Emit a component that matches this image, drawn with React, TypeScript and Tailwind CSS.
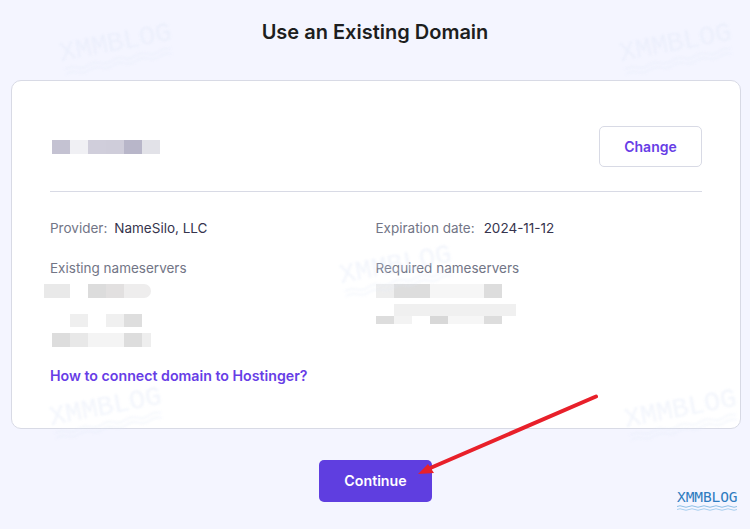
const INTER = "font-['Inter','Liberation_Sans',sans-serif]";

type Block = [number, string];

function Mosaic({ blocks, className }: { blocks: Block[]; className: string }) {
  return (
    <div className={`flex overflow-hidden blur-[0.4px] ${className}`}>
      {blocks.map(([w, c], i) => (
        <div key={i} className="h-full" style={{ width: w, backgroundColor: c }} />
      ))}
    </div>
  );
}

function Watermark({ className }: { className: string }) {
  return (
    <div className={`absolute pointer-events-none -rotate-[11deg] blur-[0.8px] ${className}`}>
      <div className="font-['Liberation_Mono',monospace] text-[27px] leading-[26px] tracking-[0px] text-[#dfe6f6] opacity-40">
        XMMBLOG
      </div>
      <svg width="118" height="12" viewBox="0 0 118 12" className="opacity-25">
        <path d="M2 3q6-3 12 0t12 0 12 0 12 0 12 0 12 0 12 0 12 0 12 0" fill="none" stroke="#dfe6f6" strokeWidth="2.5" />
        <path d="M2 8q6-3 12 0t12 0 12 0 12 0 12 0 12 0 12 0 12 0 12 0" fill="none" stroke="#dfe6f6" strokeWidth="2.5" />
      </svg>
    </div>
  );
}

export default function App() {
  return (
    <div className={`relative w-[750px] h-[529px] overflow-hidden bg-[#f4f5ff] ${INTER}`}>
      <h1 className="pt-[20px] h-[80px] text-center text-[20px] leading-[25px] font-semibold text-[#1d1e20]">
        Use an Existing Domain
      </h1>

      <div className="mx-[11px] w-[730px] h-[349px] rounded-[10px] border border-[#d8dae5] bg-white px-[38px] pt-[45px]">
        <div className="flex items-center justify-between h-[41px]">
          <Mosaic
            className="ml-[2px] h-[14px] mt-[1px]"
            blocks={[
              [18, "#c4c2d2"],
              [18, "#f0f0f4"],
              [18, "#d0cedb"],
              [18, "#cfcdda"],
              [18, "#b8b6c9"],
              [18, "#e2e2e8"],
            ]}
          />
          <button className="w-[103px] h-[41px] rounded-[5px] border border-[#d8dae5] bg-white text-[14px] font-semibold text-[#673de6]">
            Change
          </button>
        </div>

        <div className="mt-[24px] border-t border-[#d8dae5]" />

        <div className="grid grid-cols-[325.5px_1fr] mt-[26px] text-[13.5px] leading-[20px]">
          <div>
            <div className="text-[#727586]">
              Provider:<span className="ml-[7px] text-[#36344d]">NameSilo, LLC</span>
            </div>
            <div className="mt-[20px] text-[#727586]">Existing nameservers</div>
            <Mosaic
              className="-ml-[6px] mt-[6px] h-[14px] w-[107px] rounded-r-[7px]"
              blocks={[
                [26, "#e9e9e9"],
                [18, "#ffffff"],
                [18, "#dcdcdc"],
                [18, "#e2e0e0"],
                [27, "#eeeded"],
              ]}
            />
            <Mosaic
              className="mt-[16px] h-[13px]"
              blocks={[
                [20, "#ffffff"],
                [18, "#efefef"],
                [18, "#ffffff"],
                [18, "#f0f0f0"],
                [18, "#dedede"],
              ]}
            />
            <Mosaic
              className="ml-[2px] mt-[6px] h-[14px]"
              blocks={[
                [18, "#dddddd"],
                [18, "#e8e8e8"],
                [36, "#f4f4f4"],
                [18, "#dddddd"],
                [9, "#eeeeee"],
              ]}
            />
            <a className="block mt-[19px] text-[14.2px] font-semibold text-[#673de6] whitespace-nowrap">
              How to connect domain to Hostinger?
            </a>
          </div>
          <div>
            <div className="text-[#727586]">
              Expiration date:<span className="ml-[9px] text-[#36344d]">2024-11-12</span>
            </div>
            <div className="mt-[20px] text-[#727586]">Required nameservers</div>
            <Mosaic
              className="mt-[6px] h-[14px]"
              blocks={[
                [18, "#eeeeee"],
                [36, "#dddddd"],
                [54, "#f6f6f6"],
                [18, "#dddddd"],
              ]}
            />
            <Mosaic className="ml-[18px] mt-[6px] h-[12px]" blocks={[[122, "#f0f0f0"]]} />
            <Mosaic
              className="h-[8px]"
              blocks={[
                [18, "#dddddd"],
                [18, "#f3f3f3"],
                [18, "#ffffff"],
                [18, "#d8d8d8"],
                [36, "#f6f6f6"],
                [18, "#dddddd"],
              ]}
            />
          </div>
        </div>
      </div>

      <div className="flex justify-center pl-[1px] mt-[31px]">
        <button className="w-[113px] h-[42px] rounded-[5px] bg-[#5f3ee0] text-[14.2px] font-semibold text-white">
          Continue
        </button>
      </div>

      <Watermark className="left-[60px] top-[30px]" />
      <Watermark className="left-[620px] top-[30px]" />
      <Watermark className="left-[340px] top-[252px]" />
      <Watermark className="left-[50px] top-[394px]" />
      <Watermark className="left-[625px] top-[396px]" />

      <svg className="absolute left-0 top-0" width="750" height="529" viewBox="0 0 750 529">
        <path d="M596 396.5L428 469" stroke="#e8202a" strokeWidth="4" strokeLinecap="round" fill="none" />
        <polygon points="418,474 428,464 434,473" fill="#e8202a" />
      </svg>

      <div className="absolute left-[677px] top-[490px] w-[62px]">
        <div className="font-['DejaVu_Sans_Mono',monospace] text-[14.5px] leading-[15px] tracking-[-0.1px] text-[#2f7cc0]">
          XMMBLOG
        </div>
        <svg width="62" height="7" viewBox="0 0 62 7">
          <path d="M0 1.5q3-1.5 6 0t6 0 6 0 6 0 6 0 6 0 6 0 6 0 6 0 6 0" fill="none" stroke="#8cbfe6" strokeWidth="1" />
          <path d="M0 4.5q3-1.5 6 0t6 0 6 0 6 0 6 0 6 0 6 0 6 0 6 0 6 0" fill="none" stroke="#a8cfee" strokeWidth="1" />
        </svg>
      </div>
    </div>
  );
}
